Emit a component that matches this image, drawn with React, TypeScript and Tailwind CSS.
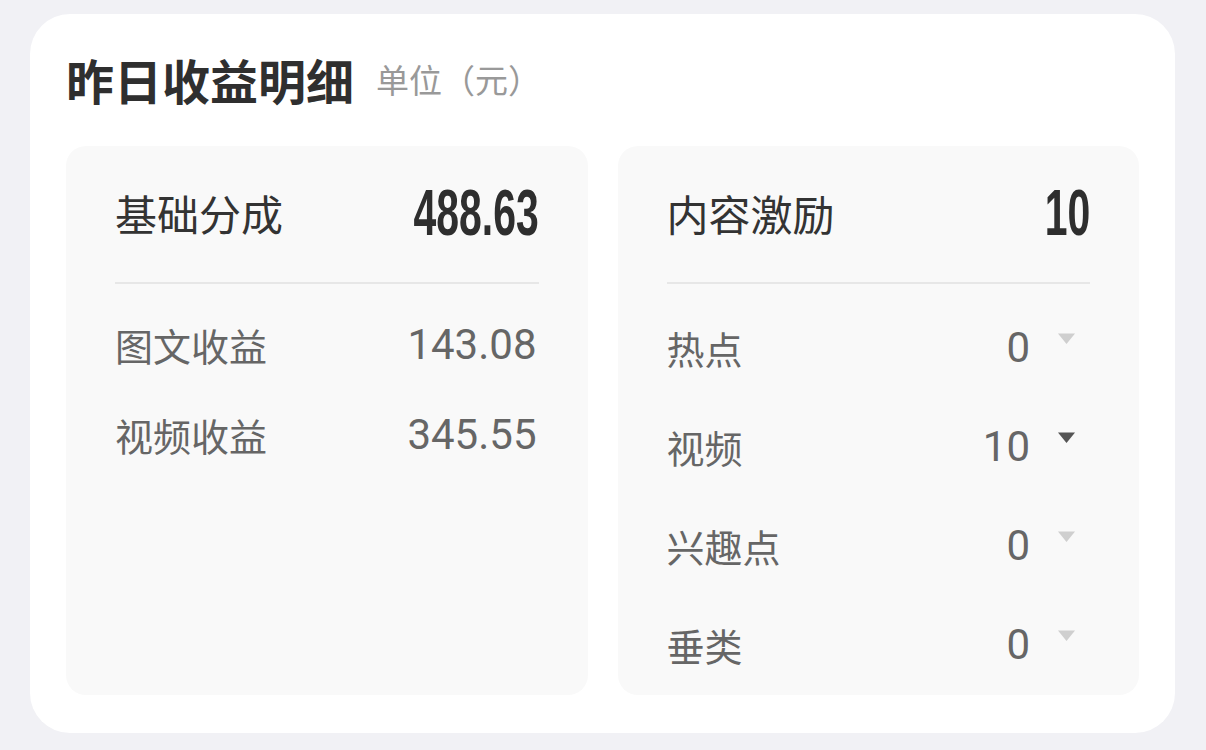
const cjk = "font-['Noto_Sans_CJK_SC','Noto_Sans',sans-serif]"

type Item = { label: string; value: string; active?: boolean }

const base: Item[] = [
  { label: "图文收益", value: "143.08" },
  { label: "视频收益", value: "345.55" },
]

const incentive: Item[] = [
  { label: "热点", value: "0" },
  { label: "视频", value: "10", active: true },
  { label: "兴趣点", value: "0" },
  { label: "垂类", value: "0" },
]

function Caret({ active }: { active?: boolean }) {
  return (
    <svg width="17" height="11" viewBox="0 0 17 11" className="mb-[19px] shrink-0">
      <path d="M0 0.5h17l-8.5 10.5z" fill={active ? "#555555" : "#cfcfcf"} />
    </svg>
  )
}

function PanelHeader({ title, total }: { title: string; total: string }) {
  return (
    <>
      <div className="flex h-[70px] items-center justify-between">
        <span className={`${cjk} text-[42px] leading-none text-[#333333]`}>{title}</span>
        <span className="inline-block origin-right scale-x-[0.64] font-['Liberation_Sans',sans-serif] text-[64px] font-bold leading-none text-[#2e2e2e]">
          {total}
        </span>
      </div>
      <div className="mt-[34px] h-[2px] bg-[#e7e7e7]" />
    </>
  )
}

export default function App() {
  return (
    <div className="min-h-[750px] w-[1206px] bg-[#f1f1f5] pl-[30px] pt-[14px]">
      <div className="w-[1145px] rounded-[40px] bg-white px-[36px] pb-[38px] pt-[40px]">
        <div className="flex h-[50px] items-center gap-[22px]">
          <h1 className={`${cjk} text-[48px] font-bold leading-none text-[#2f2f2f]`}>昨日收益明细</h1>
          <span className={`${cjk} text-[33px] leading-none text-[#999999]`}>单位（元）</span>
        </div>

        <div className="mt-[42px] flex gap-[30px]">
          <div className="flex-1 rounded-[20px] bg-[#f9f9f9] px-[49px] pt-[32px]">
            <PanelHeader title="基础分成" total="488.63" />
            <div className="mt-[16px]">
              {base.map((r) => (
                <div key={r.label} className="flex h-[90px] items-center justify-between pr-[2px]">
                  <span className={`${cjk} text-[38px] leading-none text-[#666666]`}>{r.label}</span>
                  <span className="font-['Roboto',sans-serif] text-[42px] leading-none text-[#666666]">{r.value}</span>
                </div>
              ))}
            </div>
          </div>

          <div className="flex-1 rounded-[20px] bg-[#f9f9f9] px-[49px] pt-[32px]">
            <PanelHeader title="内容激励" total="10" />
            <div className="mt-[14px] pb-[1px]">
              {incentive.map((r) => (
                <div key={r.label} className="flex h-[99px] items-center justify-between pr-[15px]">
                  <span className={`${cjk} text-[38px] leading-none text-[#666666]`}>{r.label}</span>
                  <div className="flex items-center gap-[28px]">
                    <span className="font-['Roboto',sans-serif] text-[42px] leading-none text-[#666666]">{r.value}</span>
                    <Caret active={r.active} />
                  </div>
                </div>
              ))}
            </div>
          </div>
        </div>
      </div>
    </div>
  )
}
